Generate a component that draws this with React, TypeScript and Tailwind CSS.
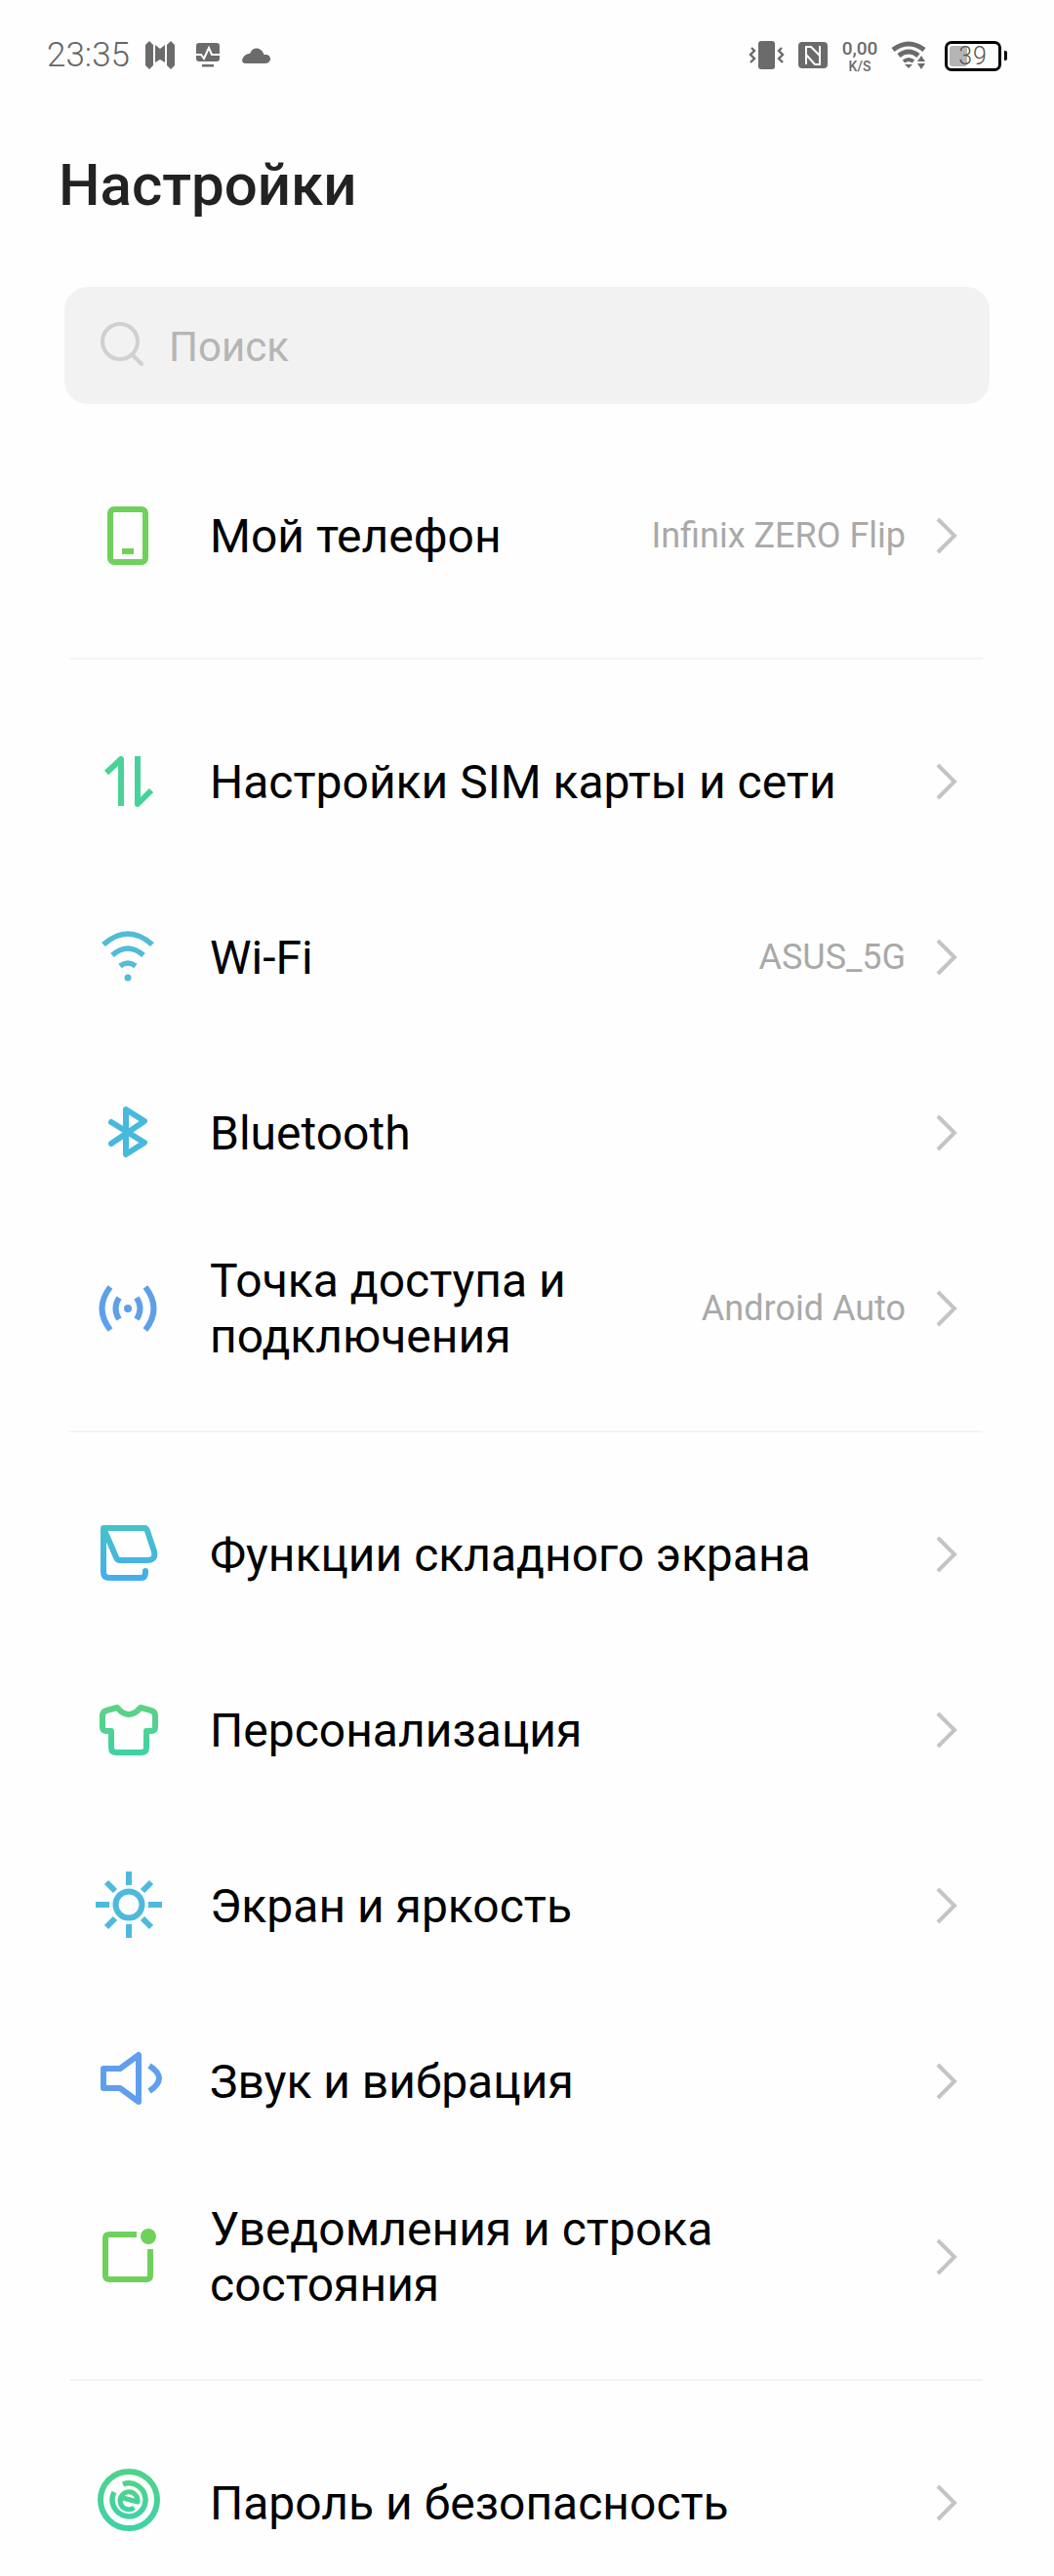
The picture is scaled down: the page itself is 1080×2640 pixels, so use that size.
import React from "react";

const grad = (id: string, a: string, b: string) => (
  <defs>
    <linearGradient id={id} x1="0" y1="0" x2="0" y2="1">
      <stop offset="0" stopColor={a} />
      <stop offset="1" stopColor={b} />
    </linearGradient>
  </defs>
);

const Ico: React.FC<{ children: React.ReactNode; vy?: number }> = ({ children, vy = 0 }) => (
  <svg width="80" height="80" viewBox={`0 ${vy} 80 80`} fill="none" strokeLinecap="round" strokeLinejoin="round" className="shrink-0">
    {children}
  </svg>
);

const PhoneIcon = () => (
  <Ico>
    <rect x="22" y="13" width="36" height="54" rx="4" stroke="#6fd15c" strokeWidth="6" />
    <rect x="34" y="53" width="12" height="6" fill="#6fd15c" />
  </Ico>
);

const SimIcon = () => (
  <Ico>
    <path d="M18 31 L33 17 V65" stroke="#4bd296" strokeWidth="6" strokeLinecap="butt" />
    <path d="M50 14 V63 L64 49" stroke="#47d29b" strokeWidth="6" strokeLinecap="butt" />
  </Ico>
);

const WifiIcon = () => (
  <Ico>
    <g stroke="#4fbcd8" strokeWidth="5.5" strokeLinecap="butt">
      <path d="M15 27 Q40 5 65 27" />
      <path d="M24 38 Q40 24 56 38" />
      <path d="M32 49 Q40 43 48 49" />
    </g>
    <circle cx="40" cy="61" r="3.5" fill="#4fbcd8" />
  </Ico>
);

const BtIcon = () => (
  <Ico>
    <path d="M23 29 L57 50 L38 62 V16 L57 28 L23 51" stroke="#47b9dc" strokeWidth="6" />
  </Ico>
);

const HotspotIcon = () => (
  <Ico>
    <g stroke="#5f9fe9" strokeWidth="6" strokeLinecap="butt">
      <path d="M22 18 Q5 40 22 62" />
      <path d="M58 18 Q75 40 58 62" />
      <path d="M31 29 Q24 40 31 51" />
      <path d="M49 29 Q56 40 49 51" />
    </g>
    <circle cx="40" cy="40" r="4" fill="#5f9fe9" />
  </Ico>
);

const FoldIcon = () => (
  <Ico>
    {grad("g-fold", "#46c1cb", "#45aeea")}
    <path
      d="M15 13 H57 Q59 13 60 16 L67 37 Q69 46 60 46 H32 Q29 46 28 43 L15 13 V58 Q15 64 21 64 H54 Q58 64 58 58 V57"
      stroke="url(#g-fold)"
      strokeWidth="6"
    />
  </Ico>
);

const ShirtIcon = () => (
  <Ico>
    {grad("g-shirt", "#5dd285", "#3fd3a2")}
    <path
      d="M29 17 Q41 31 53 17 L64 20 Q68 21 68 26 V37 Q68 41 64 41 H59 V58 Q59 63 54 63 H28 Q23 63 23 58 V41 H18 Q14 41 14 37 V26 Q14 21 18 20 Z"
      stroke="url(#g-shirt)"
      strokeWidth="6"
    />
  </Ico>
);

const SunIcon = () => (
  <Ico>
    <circle cx="41" cy="39" r="13.5" stroke="#4dbadd" strokeWidth="6" />
    <g stroke="#4dbadd" strokeWidth="6" strokeLinecap="butt">
      <path d="M41 5 V19" />
      <path d="M41 59 V73" />
      <path d="M7 39 H21" />
      <path d="M61 39 H75" />
      <path d="M18 16 L27 25" />
      <path d="M64 16 L55 25" />
      <path d="M18 62 L27 53" />
      <path d="M64 62 L55 53" />
    </g>
  </Ico>
);

const SoundIcon = () => (
  <Ico vy={3}>
    <path d="M15 30 H32 L51 16 V64 L32 50 H15 Z" stroke="#5f9fee" strokeWidth="6" />
    <path d="M62 27 Q82 40 62 53" stroke="#5f9fee" strokeWidth="6" strokeLinecap="butt" />
  </Ico>
);

const NotifIcon = () => (
  <Ico>
    <path d="M49 17 H21 Q17 17 17 21 V59 Q17 63 21 63 H59 Q63 63 63 59 V32" stroke="#6fd15c" strokeWidth="6" strokeLinecap="butt" />
    <circle cx="61" cy="19" r="8" fill="#6fd15c" />
  </Ico>
);

const LockIcon = () => (
  <Ico vy={3}>
    {grad("g-lock", "#50d28c", "#3fd2a5")}
    <circle cx="41" cy="40" r="29" stroke="url(#g-lock)" strokeWidth="6" />
    <path d="M35 24 A17 17 0 1 1 26 32" stroke="url(#g-lock)" strokeWidth="5.5" strokeLinecap="butt" />
    <path d="M35 38 L50 42 A9 9 0 1 0 46.5 48" stroke="url(#g-lock)" strokeWidth="5" strokeLinecap="butt" />
  </Ico>
);

const Chevron = () => (
  <svg width="24" height="40" viewBox="0 0 24 40" fill="none" className="shrink-0">
    <path d="M3 3 L20 20 L3 37" stroke="#c4c4c4" strokeWidth="4" />
  </svg>
);

const Row: React.FC<{ icon: React.ReactNode; title: React.ReactNode; value?: string }> = ({ icon, title, value }) => (
  <div className="flex h-[180px] items-center pl-[91px] pr-[98px]">
    {icon}
    <div className="ml-[44px] min-w-0 flex-1 text-[48px] leading-[57px] text-black">{title}</div>
    {value && <div className="mr-[30px] text-[36px] text-[#a9a9a9]">{value}</div>}
    <Chevron />
  </div>
);

const Divider = () => (
  <div className="py-[35px]">
    <div className="ml-[71px] mr-[73px] h-[2px] bg-[#f4f4f4]" />
  </div>
);

const LeftStatus = () => (
  <div className="flex items-center">
    <span className="text-[35px] font-light text-[#666]">23:35</span>
    <svg width="32" height="30" viewBox="0 0 32 30" fill="#6b6b6b" className="ml-[15px]">
      <path d="M1 4 L5 0 L9 4 V25 L5 29 L1 25 Z" />
      <path d="M11 4 L16 8 L21 4 V22 L16 19 L11 22 Z" />
      <path d="M23 4 L27 0 L31 4 V25 L27 29 L23 25 Z" />
    </svg>
    <svg width="26" height="26" viewBox="0 0 26 26" fill="none" className="ml-[20px]">
      <rect x="1" y="0" width="24" height="19" rx="3" fill="#6b6b6b" />
      <path d="M1 12 H6 L9 16 L14 5 L17 12 H25" stroke="#fff" strokeWidth="2" />
      <rect x="7" y="22" width="12" height="2.5" fill="#6b6b6b" />
    </svg>
    <svg width="32" height="18" viewBox="0 0 32 18" fill="#6b6b6b" className="ml-[20px]">
      <path d="M6 17 H26 C32 17 33 9 27 8 C26 8 25 8 24.5 8 C22 0 13 -1 10 7 C4 6 -2 17 6 17 Z" />
    </svg>
  </div>
);

const RightStatus = () => (
  <div className="flex items-center">
    <svg width="38" height="30" viewBox="0 0 38 30" fill="none">
      <rect x="10" y="0" width="17" height="29" rx="3" fill="#6b6b6b" />
      <path d="M3 7 L6 10 L2 14 L6 18 L2 22" stroke="#6b6b6b" strokeWidth="2.4" />
      <path d="M34 7 L31 10 L35 14 L31 18 L35 22" stroke="#6b6b6b" strokeWidth="2.4" />
    </svg>
    <svg width="30" height="28" viewBox="0 0 30 28" className="ml-[13px]">
      <rect x="0" y="0" width="30" height="27" rx="4" fill="#6b6b6b" />
      <path d="M8 23 V5 H13 L22 14 V23 M22 4 V23 H17 L8 13" fill="none" stroke="#fff" strokeWidth="2" />
    </svg>
    <div className="ml-[14px] flex w-[38px] flex-col items-center font-medium text-[#6b6b6b]">
      <span className="text-[19px] leading-[19px]">0,00</span>
      <span className="mt-[2px] text-[14px] leading-[14px]">K/S</span>
    </div>
    <svg width="38" height="30" viewBox="0 0 38 30" fill="none" className="ml-[13px]">
      <path d="M2 9 Q18 -3 34 9" stroke="#6b6b6b" strokeWidth="5" />
      <path d="M8 15 Q18 7 28 15" stroke="#6b6b6b" strokeWidth="5" />
      <path d="M13 21 Q18 17 23 21" stroke="#6b6b6b" strokeWidth="4" />
      <path d="M14 24 H22 L18 28 Z" fill="#6b6b6b" />
      <path d="M27 21 H35 L31 15 Z" fill="#6b6b6b" />
      <path d="M27 23 H35 L31 29 Z" fill="#6b6b6b" />
    </svg>
    <div className="relative ml-[17px] flex h-[31px] w-[58px] items-center justify-center rounded-[7px] border-[3px] border-black">
      <div className="absolute bottom-[2px] left-[2px] top-[2px] w-[18px] rounded-[3px] bg-[#b5b5b5]" />
      <span className="relative text-[25px] font-light leading-none tracking-[1px] text-[#555]">39</span>
    </div>
    <div className="ml-[3px] h-[10px] w-[3px] rounded-r-[2px] bg-black" />
  </div>
);

export default function App() {
  return (
    <div className="h-[2640px] w-[1080px] overflow-hidden bg-[#fefefe] font-['Roboto',sans-serif]">
      <div className="flex h-[114px] items-center justify-between pl-[48px] pr-[48px]">
        <LeftStatus />
        <RightStatus />
      </div>
      <div className="flex h-[152px] items-center pl-[60px] text-[60px] font-medium text-[#222]">Настройки</div>
      <div className="mx-[66px] mt-[28px] flex h-[120px] items-center rounded-[24px] bg-[#f2f2f2] pl-[37px]">
        <svg width="46" height="48" viewBox="0 0 46 48" fill="none" className="shrink-0">
          <circle cx="20" cy="20" r="18" stroke="#d0d0d0" strokeWidth="4" />
          <path d="M33 34 L42 43" stroke="#d0d0d0" strokeWidth="4" strokeLinecap="round" />
        </svg>
        <span className="ml-[24px] mt-[2px] text-[42px] text-[#b5b5b5]">Поиск</span>
      </div>
      <div className="mt-[45px]">
        <Row icon={<PhoneIcon />} title="Мой телефон" value="Infinix ZERO Flip" />
        <Divider />
        <Row icon={<SimIcon />} title="Настройки SIM карты и сети" />
        <Row icon={<WifiIcon />} title="Wi-Fi" value="ASUS_5G" />
        <Row icon={<BtIcon />} title="Bluetooth" />
        <Row
          icon={<HotspotIcon />}
          title={
            <>
              Точка доступа и
              <br />
              подключения
            </>
          }
          value="Android Auto"
        />
        <Divider />
        <Row icon={<FoldIcon />} title="Функции складного экрана" />
        <Row icon={<ShirtIcon />} title="Персонализация" />
        <Row icon={<SunIcon />} title="Экран и яркость" />
        <Row icon={<SoundIcon />} title="Звук и вибрация" />
        <Row
          icon={<NotifIcon />}
          title={
            <>
              Уведомления и строка
              <br />
              состояния
            </>
          }
        />
        <Divider />
        <Row icon={<LockIcon />} title="Пароль и безопасность" />
      </div>
    </div>
  );
}
